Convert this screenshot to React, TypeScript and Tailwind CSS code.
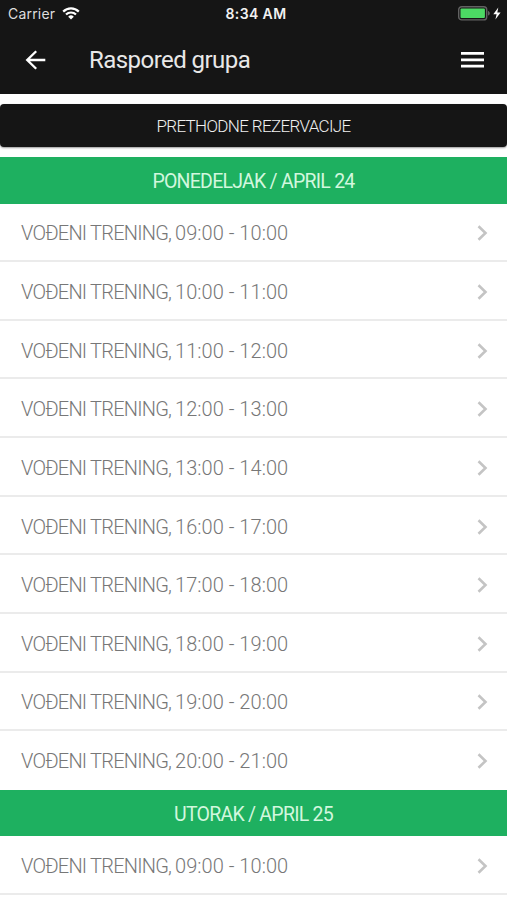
type Day = {
  title: string;
  slots: string[];
};

const days: Day[] = [
  {
    title: 'PONEDELJAK / APRIL 24',
    slots: [
      '09:00 - 10:00',
      '10:00 - 11:00',
      '11:00 - 12:00',
      '12:00 - 13:00',
      '13:00 - 14:00',
      '16:00 - 17:00',
      '17:00 - 18:00',
      '18:00 - 19:00',
      '19:00 - 20:00',
      '20:00 - 21:00',
    ],
  },
  { title: 'UTORAK / APRIL 25', slots: ['09:00 - 10:00'] },
];

function StatusBar() {
  return (
    <div className="grid h-[27px] grid-cols-3 items-center pr-[6px] pl-2 font-['Inter',sans-serif] text-white">
      <div className="flex items-center gap-[7px]">
        <span className="text-[14px] tracking-[0.2px] text-[#dedede]">Carrier</span>
        <svg width="18" height="13" viewBox="0 0 18 13" fill="none" stroke="currentColor" strokeWidth="2.2">
          <path d="M1.2 4.6a11 11 0 0 1 15.6 0" />
          <path d="M4 7.6a7 7 0 0 1 10 0" />
          <path d="M9 12.5 6.2 9.7a4 4 0 0 1 5.6 0z" fill="currentColor" stroke="none" />
        </svg>
      </div>
      <span className="pl-[3px] text-center text-[14px] font-semibold tracking-[0.4px] whitespace-nowrap text-[#f1f1f1]">8:34 AM</span>
      <div className="flex items-center justify-end">
        <svg width="43" height="16" viewBox="0 0 43 16">
          <rect x="0.7" y="0.7" width="28" height="13.2" rx="3" fill="none" stroke="#626262" strokeWidth="1.4" />
          <rect x="2.5" y="2.5" width="24.4" height="9.6" rx="1" fill="#4cd964" />
          <path d="M30 5c2.4.6 2.4 4 0 4.6z" fill="#626262" />
          <path d="M40.300 1.500 35.300 8.200h3.300L37.400 13.500l5.200-7h-3.300z" fill="#fff" />
        </svg>
      </div>
    </div>
  );
}

function Header() {
  return (
    <header className="h-[93.5px] bg-[#151515]">
      <StatusBar />
      <div className="flex h-[66px] items-center pr-[23px] pl-[25px] text-white">
        <svg width="21" height="20" viewBox="0 0 21 20" fill="none" stroke="currentColor" strokeWidth="2.3">
          <path d="M20.300 10H2.200M11.200 1.200 2.200 10l9 8.800" />
        </svg>
        <h1 className="ml-[43px] flex-1 text-[24px] leading-[30px] tracking-[-0.550px] text-[#e8e8e8]">Raspored grupa</h1>
        <svg width="23" height="16" viewBox="0 0 23 16" fill="currentColor">
          <path d="M0 0h23v2.700H0zM0 6.500h23v2.700H0zM0 12.700h23v2.700H0z" />
        </svg>
      </div>
    </header>
  );
}

function SlotRow({ time }: Readonly<{ time: string }>) {
  return (
    <li className="flex h-[58.65px] items-center justify-between border-b-2 border-[#ebebeb] pt-[3px] pr-[19px] pl-[21px] [section:not(:last-child)_&]:last:border-transparent">
      <span className="flex text-[20px] leading-6 font-light whitespace-nowrap text-[#777777]">
        <span className="w-[154px] tracking-[-0.780px]">VOĐENI TRENING,</span>
        <span className="tracking-[0.04px] tabular-nums">{time}</span>
      </span>
      <svg width="11" height="16" viewBox="0 0 11 16" fill="none" stroke="#c4c4c4" strokeWidth="2.6">
        <path d="M1.500 1.200 8.500 8l-7 6.800" />
      </svg>
    </li>
  );
}

export default function App() {
  return (
    <main className="h-[900px] w-full overflow-hidden bg-white font-['Roboto','Noto_Sans',sans-serif]">
      <Header />
      <button
        type="button"
        className="mt-[10px] mb-[10px] flex h-[43.5px] w-full items-center justify-center rounded-[4px] bg-[#151515] pt-[2px] text-[17px] font-light tracking-[-0.650px] text-[#f0f0f0] shadow-[0_1px_2px_rgba(0,0,0,0.4)]"
      >
        PRETHODNE REZERVACIJE
      </button>
      {days.map((day) => (
        <section key={day.title}>
          <h2 className="flex h-[46.5px] items-center justify-center bg-[#1eb060] pt-[2px] text-[19.5px] tracking-[-0.750px] text-[#d2f7de]">
            {day.title}
          </h2>
          <ul>
            {day.slots.map((slot) => (
              <SlotRow key={slot} time={slot} />
            ))}
          </ul>
        </section>
      ))}
    </main>
  );
}
